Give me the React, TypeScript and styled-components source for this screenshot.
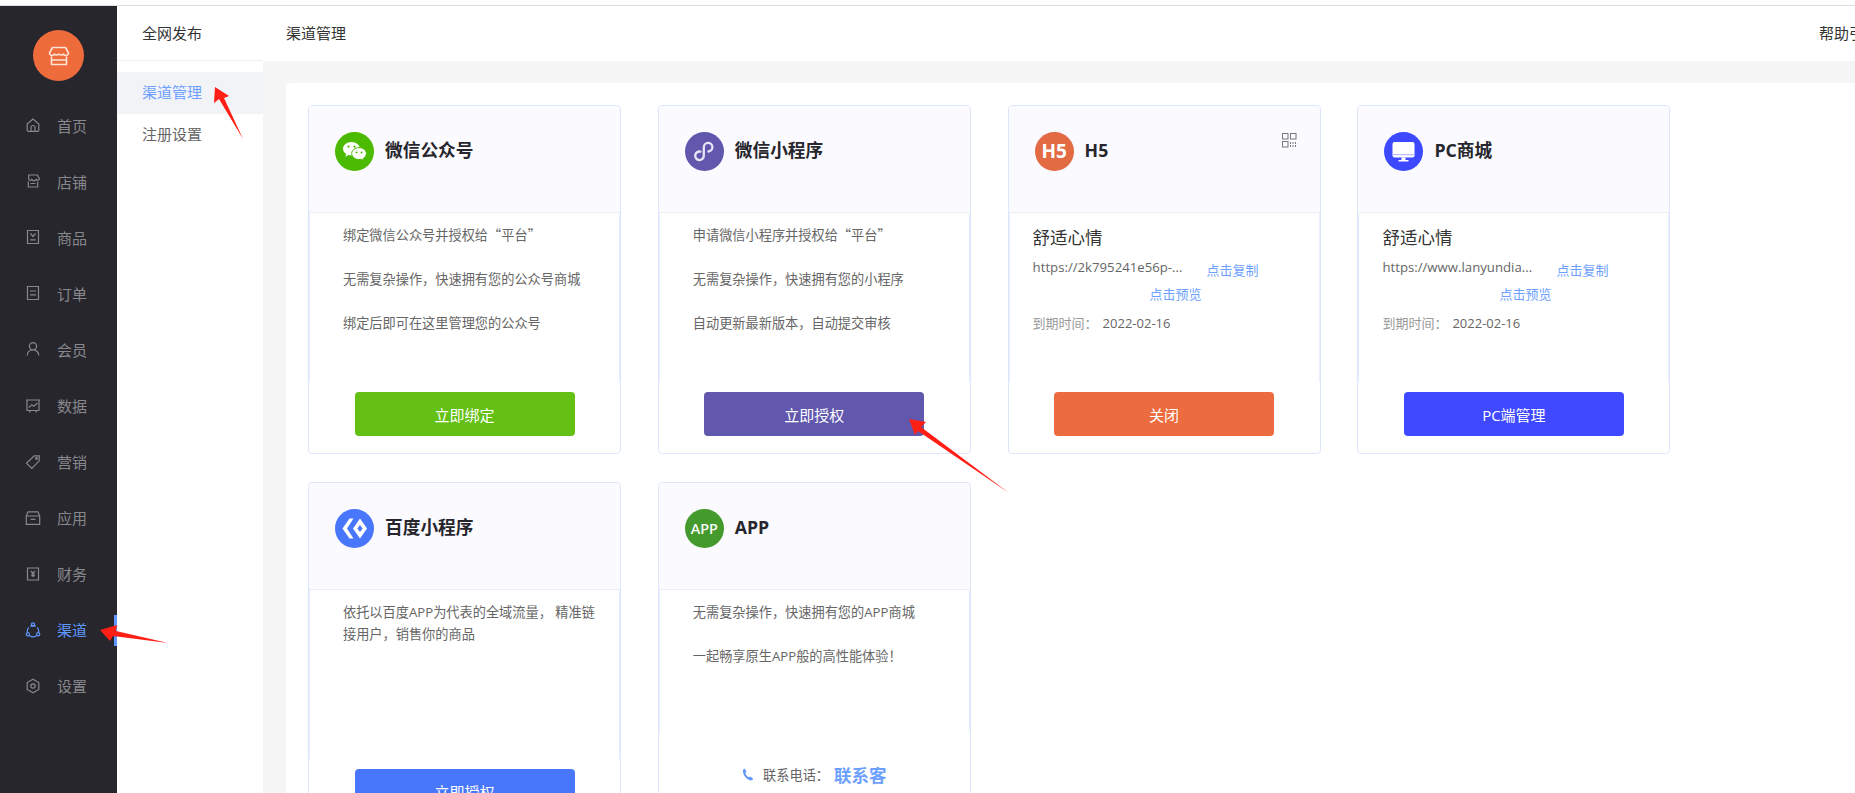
import React from 'react'
import styled, { createGlobalStyle } from 'styled-components'

const GlobalStyle = createGlobalStyle`
    html, body {
        margin: 0;
        padding: 0;
        height: 100%;
        overflow: hidden;
        background: #fff;
    }
    body {
        font-family: "Open Sans", "Noto Sans CJK SC", sans-serif;
        font-size: 13px;
        color: #333;
    }
`

const Page = styled.div`
    position: relative;
    display: flex;
    flex-direction: column;
    width: 1855px;
    height: 793px;
    overflow: hidden;
`

const TopStrip = styled.div`
    flex: none;
    height: 5px;
    background: #fff;
    border-bottom: 1px solid #dedede;
`

const Frame = styled.div`
    flex: 1;
    display: flex;
    min-height: 0;
`

const Sidebar = styled.nav`
    flex: none;
    width: 117px;
    background: #26262c;
`

const LogoWrap = styled.div`
    display: flex;
    justify-content: center;
    padding: 24px 0 16px;
`

const Logo = styled.div`
    display: flex;
    align-items: center;
    justify-content: center;
    width: 51px;
    height: 51px;
    border-radius: 50%;
    background: #ee6b3b;
`

const NavItem = styled.div<{ $active?: boolean }>`
    position: relative;
    display: flex;
    align-items: center;
    gap: 16px;
    height: 56.1px;
    padding-left: 25px;
    font-size: 15px;
    color: ${p => (p.$active ? '#5f97ff' : '#88888c')};

    svg {
        flex: none;
        fill: none;
        stroke: currentColor;
        stroke-width: 1.2;
    }

    &::after {
        content: ${p => (p.$active ? '""' : 'none')};
        position: absolute;
        right: 0;
        top: 13px;
        width: 3px;
        height: 31px;
        background: #5f97ff;
    }
`

const SubNav = styled.aside`
    flex: none;
    width: 146px;
    background: #fff;
`

const SubTitle = styled.div`
    height: 54px;
    line-height: 54px;
    padding-left: 25px;
    font-size: 15px;
    color: #333;
    border-bottom: 1px solid #eee;
    margin-bottom: 11px;
`

const SubItem = styled.div<{ $active?: boolean }>`
    height: 42px;
    line-height: 40px;
    padding-left: 25px;
    font-size: 15px;
    color: ${p => (p.$active ? '#6d9fff' : '#666')};
    background: ${p => (p.$active ? '#f2f3f7' : 'transparent')};
`

const Main = styled.main`
    flex: 1;
    display: flex;
    flex-direction: column;
    min-width: 0;
    background: #f5f5f5;
`

const MainHeader = styled.header`
    flex: none;
    display: flex;
    justify-content: space-between;
    height: 55px;
    line-height: 54px;
    padding-left: 23px;
    font-size: 15px;
    color: #333;
    background: #fff;
    white-space: nowrap;
    overflow: hidden;
`

const Help = styled.span`
    flex: none;
    width: 36px;
    overflow: hidden;
`

const Content = styled.section`
    flex: 1;
    margin: 22px 0 0 23px;
    padding: 22px;
    background: #fff;
    border-radius: 4px 0 0 0;
    overflow: hidden;
`

const CardGrid = styled.div`
    display: flex;
    flex-wrap: wrap;
    gap: 28px 36.8px;
    width: 1400px;
`

const Card = styled.article`
    display: flex;
    flex-direction: column;
    box-sizing: border-box;
    width: 313px;
    min-height: 349px;
    border: 1px solid #dde6fb;
    border-radius: 4px;
    background: #fff;
`

const CardHead = styled.div`
    position: relative;
    flex: none;
    display: flex;
    align-items: flex-start;
    gap: 11px;
    box-sizing: border-box;
    height: 107px;
    padding: 26px 26px 0;
    background: #fafaff;
    border-bottom: 1px solid #eeeef2;
    border-radius: 4px 4px 0 0;
`

const CardTitle = styled.h3`
    margin: 0;
    line-height: 37px;
    font-size: 17.7px;
    font-weight: 700;
    color: #26262c;
`

const Badge = styled.div<{ $bg: string }>`
    flex: none;
    display: flex;
    align-items: center;
    justify-content: center;
    width: 39px;
    height: 39px;
    border-radius: 50%;
    background: ${p => p.$bg};
    color: #fff;
    overflow: hidden;
`

const BadgeText = styled.span<{ $size: number; $weight: number }>`
    font-family: "Noto Sans", sans-serif;
    font-size: ${p => p.$size}px;
    font-weight: ${p => p.$weight};
    line-height: 1;
`

const QrButton = styled.div`
    position: absolute;
    top: 27px;
    right: 23px;
    display: flex;
`

const CardBody = styled.div<{ $height: number }>`
    flex: none;
    box-sizing: border-box;
    height: ${p => p.$height}px;
    border-left: 1px solid #e8eefc;
    border-right: 1px solid #e8eefc;
`

const TextList = styled.div`
    display: flex;
    flex-direction: column;
    gap: 22px;
    padding: 11px 18px 0 33px;
`

const Line = styled.p`
    margin: 0;
    line-height: 22px;
    font-size: 13.2px;
    color: #666;
`

const Quote = styled.span`
    font-family: "Noto Sans CJK SC", sans-serif;
`

const SiteBody = styled.div`
    padding: 11px 0 0 23px;
`

const SiteName = styled.div`
    line-height: 26px;
    font-size: 17.5px;
    color: #333;
`

const UrlRow = styled.div`
    display: flex;
    align-items: flex-start;
    margin-top: 6px;
`

const Url = styled.span`
    flex: none;
    width: 155px;
    line-height: 22px;
    font-size: 13.2px;
    color: #666;
    white-space: nowrap;
`

const LinkText = styled.a`
    font-size: 13px;
    line-height: 22px;
    color: #6d9fff;
`

const CopyLink = styled(LinkText)`
    margin: 3px 0 0 19px;
`

const PreviewRow = styled.div`
    display: flex;
    margin-top: 2px;
    padding-left: 117px;
`

const Expire = styled.div`
    display: flex;
    gap: 5px;
    margin-top: 7px;
    line-height: 22px;
    font-size: 13px;
    color: #999;
`

const ExpireDate = styled.span`
    color: #666;
`

const CardFoot = styled.div`
    flex: 1;
    display: flex;
    justify-content: center;
    padding: 10px 0 17px;
`

const ActionButton = styled.button<{ $bg: string }>`
    box-sizing: border-box;
    width: 220px;
    height: 44px;
    padding: 0;
    border: 0;
    border-radius: 4px;
    font-family: inherit;
    font-size: 15px;
    color: #fff;
    background: ${p => p.$bg};
`

const ContactRow = styled.div`
    display: flex;
    align-items: center;
    height: 22px;
    margin-top: 20px;
    font-size: 13.2px;
    color: #666;
`

const PhoneIcon = styled.svg`
    margin-right: 9px;
    fill: #5f97ff;
`

const ContactName = styled.strong`
    margin-left: 5px;
    font-size: 17.5px;
    color: #6d9fff;
`

const ArrowLayer = styled.svg`
    position: absolute;
    inset: 0;
    pointer-events: none;
    fill: #ff1f14;
`

const icons: Record<string, React.ReactNode> = {
    home: <path d="M2.2 7 8 2l5.8 5v6.3a1 1 0 0 1-1 1H3.2a1 1 0 0 1-1-1V7ZM6 14.3V10.5a2 2 0 0 1 4 0v3.8" />,
    store: <path d="M3.6 2h8.8l1.9 3.5a1.6 1.6 0 0 1-3 .9 2.6 2.6 0 0 1-4.6 0 1.6 1.6 0 0 1-1.4 1 1.6 1.6 0 0 1-1.6-1.9L3.6 2ZM3.3 8.5V14h9.4V8.5M5.5 10.5h5" />,
    goods: <path d="M2.5 1.5h11v13h-11v-13ZM5.5 4.5 8 7.5l2.5-3M5.2 10.8h5.6" />,
    order: <path d="M2.5 1.5h11v13h-11v-13ZM5 6h6M5 9.8h6" />,
    member: <path d="M8 1.6a3.6 3.6 0 1 1 0 7.2 3.6 3.6 0 0 1 0-7.2ZM2.2 14.6c0-3.3 2.4-5.8 5.8-5.8s5.8 2.5 5.8 5.8" />,
    data: <path d="M1 2h14M2 2v10.5h12V2M4 9.5l2.8-2.8 2 1.6L12.5 5M5.5 12.5l-1 2M10.5 12.5l1 2" />,
    tag: <path d="M9.2 1.8h5v5l-7.4 7.6L1.5 9.2l7.7-7.4ZM11.5 3.6a.9.9 0 1 1 0 1.8.9.9 0 0 1 0-1.8Z" />,
    app: <path d="M1.3 6 3 1.8h10L14.7 6v8.3H1.3V6ZM1.3 6h13.4M5.6 9.3h4.8" />,
    finance: <path d="M2.5 2h11v12h-11V2ZM6 5l2 2.4L10 5M8 7.4v3.6M6.2 8h3.6M6.2 9.6h3.6" />,
    channel: <path d="M5.2 4.2a5.8 5.8 0 0 1 5.6 0M2.3 10a5.8 5.8 0 0 1 1.5-4.6M13.7 10a5.8 5.8 0 0 0-1.5-4.6M4.6 13.7a5.8 5.8 0 0 0 6.8 0M8 .9a1.6 1.6 0 1 1 0 3.2A1.6 1.6 0 0 1 8 .9ZM2.8 10.6a1.6 1.6 0 1 1 0 3.2 1.6 1.6 0 0 1 0-3.2ZM13.2 10.6a1.6 1.6 0 1 1 0 3.2 1.6 1.6 0 0 1 0-3.2Z" />,
    settings: <path d="M8 1.3l5.8 3.3v6.8L8 14.7l-5.8-3.3V4.6L8 1.3ZM8 5.8a2.2 2.2 0 1 1 0 4.4 2.2 2.2 0 0 1 0-4.4Z" />,
}

const navItems = [
    { key: 'home', label: '首页' },
    { key: 'store', label: '店铺' },
    { key: 'goods', label: '商品' },
    { key: 'order', label: '订单' },
    { key: 'member', label: '会员' },
    { key: 'data', label: '数据' },
    { key: 'tag', label: '营销' },
    { key: 'app', label: '应用' },
    { key: 'finance', label: '财务' },
    { key: 'channel', label: '渠道', active: true },
    { key: 'settings', label: '设置' },
]

const WechatBadge = () => (
    <svg width="39" height="39" viewBox="0 0 39 39">
        <path d="M16.5 10c-4.7 0-8.5 3-8.5 6.8 0 2.2 1.3 4.1 3.2 5.3l-.8 2.6 3-1.6c.9.3 2 .5 3.1.5 4.7 0 8.5-3.1 8.5-6.8S21.2 10 16.5 10Z" fill="#fff" />
        <path d="M24 15.6c-4 0-7.3 2.7-7.3 6s3.3 6 7.3 6c.9 0 1.7-.1 2.5-.4l2.6 1.4-.7-2.3c1.8-1.1 3-2.8 3-4.7 0-3.3-3.3-6-7.4-6Z" fill="#fff" stroke="#4cba00" strokeWidth="1" />
        <circle cx="13.5" cy="14.6" r="1.1" fill="#4cba00" />
        <circle cx="19.5" cy="14.6" r="1.1" fill="#4cba00" />
        <circle cx="21.5" cy="20.4" r="1" fill="#4cba00" />
        <circle cx="26.5" cy="20.4" r="1" fill="#4cba00" />
    </svg>
)

const MiniBadge = () => (
    <svg width="39" height="39" viewBox="0 0 39 39">
        <path d="M15.4 19.6a4.3 4.3 0 1 0 3.4 4.2v-8.6a4.3 4.3 0 1 1 4.6 4.3" fill="none" stroke="#e8e6f5" strokeWidth="2.3" strokeLinecap="round" />
    </svg>
)

const PcBadge = () => (
    <svg width="39" height="39" viewBox="0 0 39 39">
        <rect x="8.500" y="10" width="22" height="15.500" rx="2" fill="#fff" />
        <rect x="8.500" y="22" width="22" height="1.200" fill="#b9bdff" />
        <path d="M17.500 25.500h4v2.500h3v1.500h-10V28h3v-2.500Z" fill="#fff" />
    </svg>
)

const BaiduBadge = () => (
    <svg width="39" height="39" viewBox="0 0 39 39">
        <path d="M14.500 9.500h4l-6.500 10 6.500 10h-4L7.500 19.500l7-10Z" fill="#fff" />
        <path d="M25 9.500l7 10-7 10-7-10 7-10Zm0 6.500-2.600 3.500 2.600 3.500 2.600-3.500L25 16Z" fill="#fff" fillRule="evenodd" />
    </svg>
)

const QrIcon = () => (
    <svg width="15" height="15" viewBox="0 0 15 15" fill="none" stroke="#777" strokeWidth="1">
        <rect x="0.500" y="0.500" width="5.500" height="5.500" />
        <rect x="8.500" y="0.500" width="5.500" height="5.500" />
        <rect x="0.500" y="8.500" width="5.500" height="5.500" />
        <path d="M8.500 9v5M11 9v5M13.500 9v5" strokeDasharray="2 1" />
    </svg>
)

const SiteInfo = ({ url }: { url: string }) => (
    <SiteBody>
        <SiteName>舒适心情</SiteName>
        <UrlRow>
            <Url>{url}</Url>
            <CopyLink>点击复制</CopyLink>
        </UrlRow>
        <PreviewRow>
            <LinkText>点击预览</LinkText>
        </PreviewRow>
        <Expire>
            到期时间：<ExpireDate>2022-02-16</ExpireDate>
        </Expire>
    </SiteBody>
)

const App = () => {
    return (
        <Page>
            <GlobalStyle />
            <TopStrip />
            <Frame>
                <Sidebar>
                    <LogoWrap>
                        <Logo>
                            <svg width="22" height="20" viewBox="0 0 22 20" fill="none" stroke="#fde3d6" strokeWidth="1.600" strokeLinejoin="round">
                                <path d="M4.500 1.500h13l3 5.500a2.500 2.500 0 0 1-4.800 1 3.200 3.200 0 0 1-4.700 0 3.200 3.200 0 0 1-4.700 0 2.500 2.500 0 0 1-4.800-1l3-5.500Z" />
                                <path d="M3.500 10.500v8h15v-8M3.500 14h15" />
                            </svg>
                        </Logo>
                    </LogoWrap>
                    {navItems.map(item => (
                        <NavItem key={item.key} $active={item.active}>
                            <svg width="16" height="16" viewBox="0 0 16 16">{icons[item.key]}</svg>
                            {item.label}
                        </NavItem>
                    ))}
                </Sidebar>
                <SubNav>
                    <SubTitle>全网发布</SubTitle>
                    <SubItem $active>渠道管理</SubItem>
                    <SubItem>注册设置</SubItem>
                </SubNav>
                <Main>
                    <MainHeader>
                        渠道管理
                        <Help>帮助引导</Help>
                    </MainHeader>
                    <Content>
                        <CardGrid>
                            <Card>
                                <CardHead>
                                    <Badge $bg="#4cba00"><WechatBadge /></Badge>
                                    <CardTitle>微信公众号</CardTitle>
                                </CardHead>
                                <CardBody $height={169}>
                                    <TextList>
                                        <Line>绑定微信公众号并授权给<Quote>“</Quote>平台<Quote>”</Quote></Line>
                                        <Line>无需复杂操作，快速拥有您的公众号商城</Line>
                                        <Line>绑定后即可在这里管理您的公众号</Line>
                                    </TextList>
                                </CardBody>
                                <CardFoot><ActionButton $bg="#64c014">立即绑定</ActionButton></CardFoot>
                            </Card>
                            <Card>
                                <CardHead>
                                    <Badge $bg="#6157ad"><MiniBadge /></Badge>
                                    <CardTitle>微信小程序</CardTitle>
                                </CardHead>
                                <CardBody $height={169}>
                                    <TextList>
                                        <Line>申请微信小程序并授权给<Quote>“</Quote>平台<Quote>”</Quote></Line>
                                        <Line>无需复杂操作，快速拥有您的小程序</Line>
                                        <Line>自动更新最新版本，自动提交审核</Line>
                                    </TextList>
                                </CardBody>
                                <CardFoot><ActionButton $bg="#6157ad">立即授权</ActionButton></CardFoot>
                            </Card>
                            <Card>
                                <CardHead>
                                    <Badge $bg="#e26b43"><BadgeText $size={19} $weight={700}>H5</BadgeText></Badge>
                                    <CardTitle>H5</CardTitle>
                                    <QrButton><QrIcon /></QrButton>
                                </CardHead>
                                <CardBody $height={169}>
                                    <SiteInfo url="https://2k795241e56p-..." />
                                </CardBody>
                                <CardFoot><ActionButton $bg="#ec6b3f">关闭</ActionButton></CardFoot>
                            </Card>
                            <Card>
                                <CardHead>
                                    <Badge $bg="#3d49ff"><PcBadge /></Badge>
                                    <CardTitle>PC商城</CardTitle>
                                </CardHead>
                                <CardBody $height={169}>
                                    <SiteInfo url="https://www.lanyundia..." />
                                </CardBody>
                                <CardFoot><ActionButton $bg="#3f49ff">PC端管理</ActionButton></CardFoot>
                            </Card>
                            <Card>
                                <CardHead>
                                    <Badge $bg="#4977fb"><BaiduBadge /></Badge>
                                    <CardTitle>百度小程序</CardTitle>
                                </CardHead>
                                <CardBody $height={169}>
                                    <TextList>
                                        <Line>依托以百度APP为代表的全域流量， 精准链接用户，销售你的商品</Line>
                                    </TextList>
                                </CardBody>
                                <CardFoot><ActionButton $bg="#4977fb">立即授权</ActionButton></CardFoot>
                            </Card>
                            <Card>
                                <CardHead>
                                    <Badge $bg="#459a2e"><BadgeText $size={14.5} $weight={500}>APP</BadgeText></Badge>
                                    <CardTitle>APP</CardTitle>
                                </CardHead>
                                <CardBody $height={143}>
                                    <TextList>
                                        <Line>无需复杂操作，快速拥有您的APP商城</Line>
                                        <Line>一起畅享原生APP般的高性能体验！</Line>
                                    </TextList>
                                </CardBody>
                                <CardFoot>
                                    <ContactRow>
                                        <PhoneIcon width="12" height="13" viewBox="0 0 12 13">
                                            <path d="M2.600.6 4.400 3.500 3.300 5c.5 1.700 1.700 3.300 3.400 4.300l1.700-.8 2.700 2.300c-.4 1.200-1.500 1.800-2.700 1.500C4.300 11.200 1 7 .9 3 .9 1.900 1.500 1 2.600.6Z" />
                                        </PhoneIcon>
                                        联系电话：
                                        <ContactName>联系客</ContactName>
                                    </ContactRow>
                                </CardFoot>
                            </Card>
                        </CardGrid>
                    </Content>
                </Main>
            </Frame>
            <ArrowLayer width="1855" height="793" viewBox="0 0 1855 793">
                <polygon points="215,87 229,96 224,98 243,139 219,99 214,103" />
                <polygon points="100,630 117,625 116,631 168,643 113,636 110,641" />
                <polygon points="909,419 926,422 921,427 1009,493 918,431 915,435" />
            </ArrowLayer>
        </Page>
    )
}

export default App
